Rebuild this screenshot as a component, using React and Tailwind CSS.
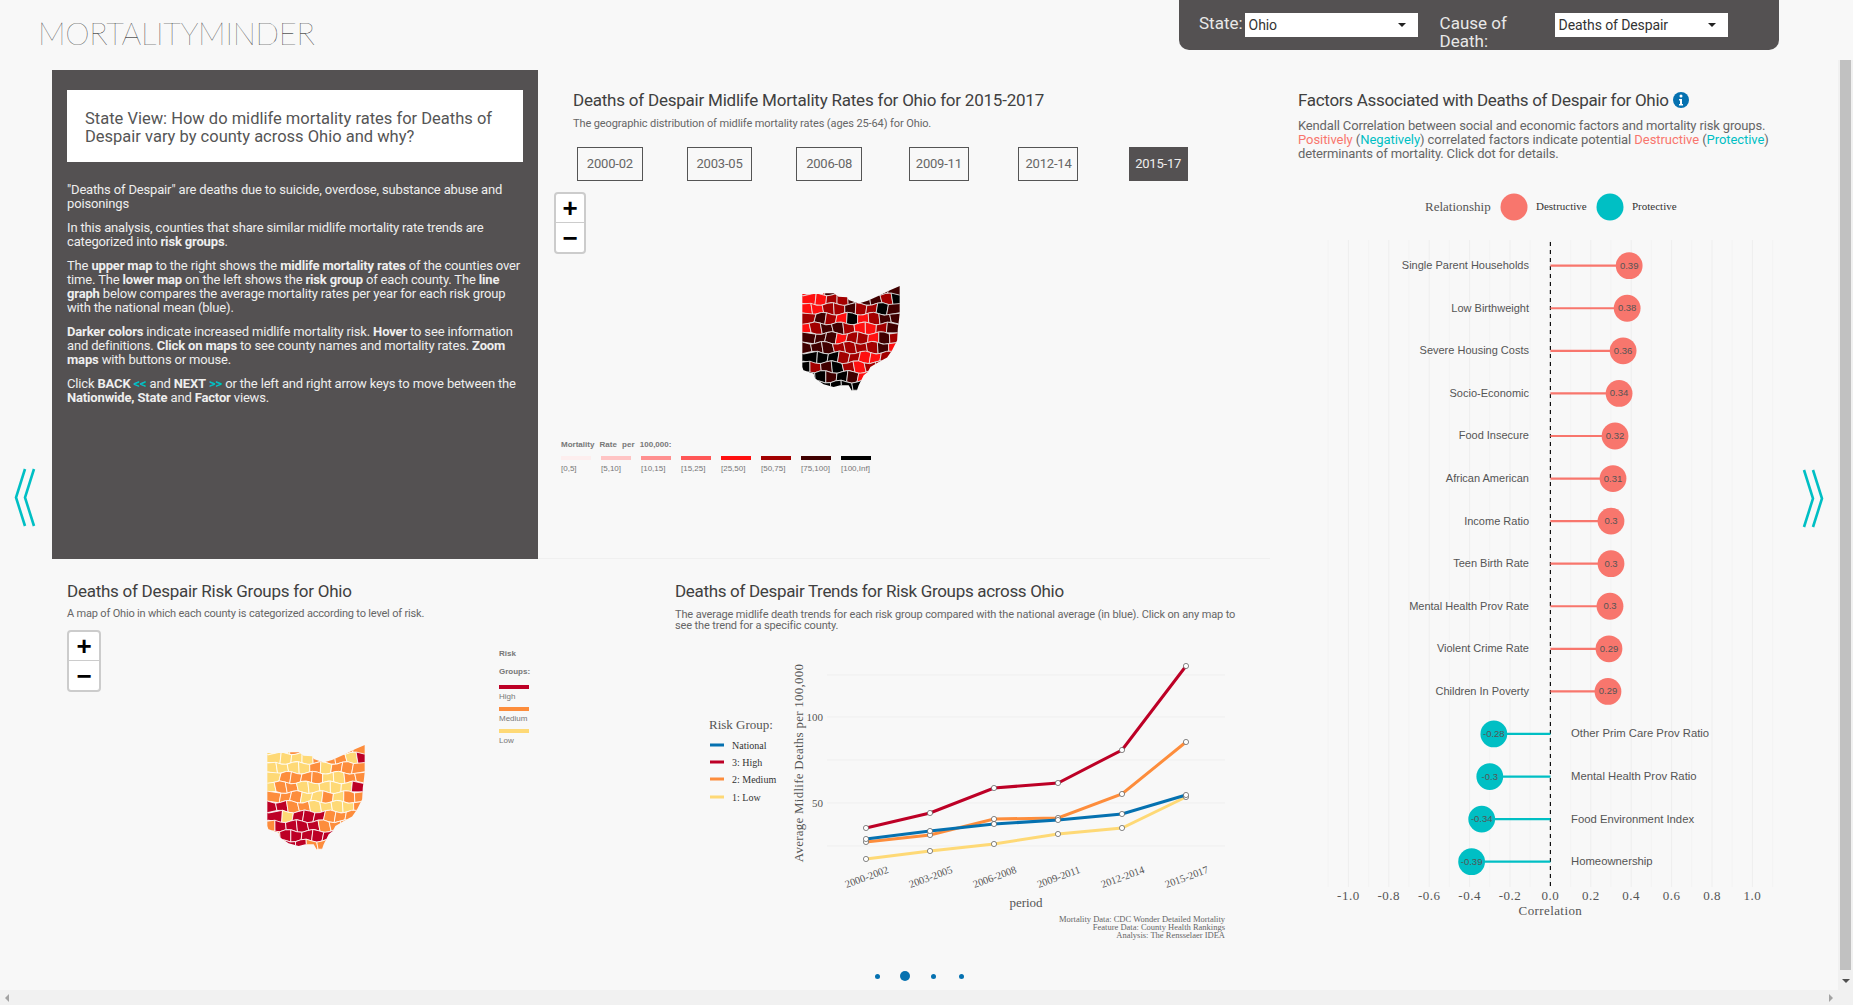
import React from 'react';

const OUTLINE = '66,72 128,72 130,70 160,70 175,80 200,82 205,90 235,100 262,92 300,75 330,60 358,48 358,130 352,175 350,210 335,240 320,262 295,275 270,290 262,305 250,315 235,345 228,365 215,362 205,345 180,345 160,350 130,342 105,325 100,310 70,300 66,290';

const RATE_COLORS = { R: '#ff1010', D: '#a30000', M: '#400000', K: '#000000' };
const RISK_COLORS = { H: '#bd0026', O: '#fd8d3c', L: '#fed976' };

const RATE_GRID = [
  'RRMDMMMMM',
  'RRDDMMMDK',
  'RRDDMDDKM',
  'DMDRKRDMM',
  'RDMMDRRDM',
  'MMMRDDRMD',
  'MMMDDDDMR',
  'KKKDDRRDR',
  'KDMKDRDDD',
  'KKMKMRKKK',
  'KKKKKKKKK',
];

const RISK_GRID = [
  'LLOLOOOOO',
  'LLLLOOOLH',
  'LLLLOLOOO',
  'LOOOOLLOO',
  'LOOLLLLLH',
  'OOOLLOLOO',
  'HHOOLLLLO',
  'HLHHHOOOO',
  'OHHHHOOOO',
  'OHHHHHOOO',
  'OOHHOOOOO',
];

const ROW_SHIFT = [0, 0.3, -0.15, 0.2, -0.25, 0.15, -0.1, 0.3, -0.2, 0.1, -0.3];

// horizontal county edge of row j, a gentle wave so the rows do not read as a table
function edgeY(j, x) {
  return 44 + j * 29 + 4.5 * Math.sin(x * 0.085 + j * 2.1);
}

// vertical county edge between cells of row j
function edgeX(i, j, lower) {
  if (i === 0) return 30;
  if (i === 9) return 400;
  const base = 66 + (i + ROW_SHIFT[j]) * 32.4;
  return base + Math.sin(i * 12.9 + j * 78.2 + (lower ? 1.7 : 0)) * 4;
}

function cellPoints(i, j) {
  const xt0 = edgeX(i, j, false);
  const xt1 = edgeX(i + 1, j, false);
  const xb0 = edgeX(i, j, true);
  const xb1 = edgeX(i + 1, j, true);
  const xtm = (xt0 + xt1) / 2;
  const xbm = (xb0 + xb1) / 2;
  const pts = [
    [xt0, edgeY(j, xt0)],
    [xtm, edgeY(j, xtm)],
    [xt1, edgeY(j, xt1)],
    [xb1, edgeY(j + 1, xb1)],
    [xbm, edgeY(j + 1, xbm)],
    [xb0, edgeY(j + 1, xb0)],
  ];
  return pts.map(p => p.join(',')).join(' ');
}

function OhioMap({ id, grid, colors, stroke }) {
  return (
    <svg width="98" height="106" viewBox="66 48 292 317">
      <defs>
        <clipPath id={id}>
          <polygon points={OUTLINE} />
        </clipPath>
      </defs>
      <g clipPath={`url(#${id})`}>
        {grid.map((row, j) =>
          row.split('').map((c, i) => (
            <polygon key={`${i}-${j}`} points={cellPoints(i, j)} fill={colors[c]} stroke={stroke} strokeWidth="2.4" />
          ))
        )}
      </g>
    </svg>
  );
}

function ZoomControl({ width }) {
  return (
    <div className={`${width} absolute left-0 top-0 rounded-[4px] border-2 border-[#ccc] bg-white font-['Liberation_Sans',sans-serif] text-[26px] font-bold leading-none text-black`}>
      <div className="flex h-[29px] items-center justify-center border-b border-[#ccc]">+</div>
      <div className="flex h-[29px] items-center justify-center">−</div>
    </div>
  );
}

const LEGEND_ITEMS = [
  ['#fdeeee', '[0,5]'],
  ['#ffc4c4', '[5,10]'],
  ['#ff8f8f', '[10,15]'],
  ['#ff5757', '[15,25]'],
  ['#ff1010', '[25,50]'],
  ['#a30000', '[50,75]'],
  ['#400000', '[75,100]'],
  ['#000000', '[100,Inf]'],
];

const YEARS = [
  ['2000-02', 'w-[66px]'],
  ['2003-05', 'w-[65px]'],
  ['2006-08', 'w-[66px]'],
  ['2009-11', 'w-[60px]'],
  ['2012-14', 'w-[60px]'],
  ['2015-17', 'w-[59px]'],
];

function RateMapPane() {
  return (
    <div className="flex-1 border-b border-[#f0f0f0] pl-[35px] pt-[20px]">
      <h2 className="h-[20px] text-[17px] font-normal leading-[20px] tracking-[-0.22px] text-[#404040]">
        Deaths of Despair Midlife Mortality Rates for Ohio for 2015-2017
      </h2>
      <p className="mt-[7px] h-[14px] text-[11px] leading-[14px] tracking-[-0.1px] text-[#666]">
        The geographic distribution of midlife mortality rates (ages 25-64) for Ohio.
      </p>
      <div className="-ml-[18px] mt-[16px] grid w-[658px] grid-cols-6 justify-items-center">
        {YEARS.map(([y, width], i) => (
          <div
            key={y}
            className={`${width} flex h-[34px] items-center justify-center whitespace-nowrap border text-[13px] tracking-[-0.2px] ${i === 5 ? 'border-[#545152] bg-[#545152] text-[#eee]' : 'border-[#555] text-[#666]'}`}
          >
            {y}
          </div>
        ))}
      </div>
      <div className="relative -ml-[19px] mt-[11px] flex h-[294px] w-[594px] items-center justify-center">
        <ZoomControl width="w-[32px]" />
        <OhioMap id="rate-map" grid={RATE_GRID} colors={RATE_COLORS} stroke="#e8e8e8" />
        <div className="absolute left-[7px] top-[247px] font-['Liberation_Sans',sans-serif] text-[8px] text-[#777]">
          <div className="h-[13px] font-bold leading-[12px] [word-spacing:3px]">Mortality Rate per 100,000:</div>
          <div className="mt-[4px] flex gap-[10px]">
            {LEGEND_ITEMS.map(([color, label]) => (
              <div key={label} className="w-[30px]">
                <div className="h-[4px]" style={{ backgroundColor: color }} />
                <div className="mt-[3px] h-[12px] leading-[12px]">{label}</div>
              </div>
            ))}
          </div>
        </div>
      </div>
    </div>
  );
}

function RiskMapPane() {
  return (
    <div className="w-[608px] pl-[15px] pt-[22px]">
      <h2 className="h-[20px] text-[17px] font-normal leading-[20px] tracking-[-0.26px] text-[#404040]">
        Deaths of Despair Risk Groups for Ohio
      </h2>
      <p className="mt-[6px] h-[14px] text-[11px] leading-[14px] tracking-[-0.18px] text-[#666]">
        A map of Ohio in which each county is categorized according to level of risk.
      </p>
      <div className="relative mt-[9px] flex h-[336px] w-[498px] items-center justify-center">
        <ZoomControl width="w-[34px]" />
        <OhioMap id="risk-map" grid={RISK_GRID} colors={RISK_COLORS} stroke="#ffffff" />
        <div className="absolute left-[432px] top-[18px] w-[30px] font-['Liberation_Sans',sans-serif] text-[8px] text-[#777]">
          <div className="h-[12px] font-bold leading-[12px]">Risk</div>
          <div className="mt-[6px] h-[12px] font-bold leading-[12px]">Groups:</div>
          <div className="mt-[7px] flex flex-col gap-[4px]">
            {[['#bd0026', 'High'], ['#fd8d3c', 'Medium'], ['#fed976', 'Low']].map(([color, label]) => (
              <div key={label}>
                <div className="h-[4px]" style={{ backgroundColor: color }} />
                <div className="mt-[2px] h-[12px] leading-[12px]">{label}</div>
              </div>
            ))}
          </div>
        </div>
      </div>
    </div>
  );
}

const PERIODS = ['2000-2002', '2003-2005', '2006-2008', '2009-2011', '2012-2014', '2015-2017'];
const XS = [866, 930, 994, 1058, 1122, 1186];
const SERIES = [
  { name: 'Low', color: '#fed976', ys: [858, 850, 843, 833, 827, 796] },
  { name: 'Medium', color: '#fd8d3c', ys: [841, 834, 818, 817, 793, 741] },
  { name: 'National', color: '#0571b0', ys: [838, 830, 823, 819, 813, 794] },
  { name: 'High', color: '#bd0026', ys: [827, 812, 787, 782, 749, 665] },
];
const TREND_LEGEND = [
  ['#0571b0', 'National', 744],
  ['#bd0026', '3: High', 761],
  ['#fd8d3c', '2: Medium', 778],
  ['#fed976', '1: Low', 796],
];

function TrendChart() {
  return (
    <svg width="560" height="310" viewBox="680 640 560 310" className="ml-[5px] mt-[10px] block font-['Liberation_Serif',serif]">
      {[674, 716, 759, 802, 845].map(y => (
        <line key={y} x1="827" x2="1225" y1={y} y2={y} stroke="#efefef" strokeWidth="1" />
      ))}
      <text x="823" y="720" textAnchor="end" className="fill-[#555] text-[11px]">100</text>
      <text x="823" y="806" textAnchor="end" className="fill-[#555] text-[11px]">50</text>
      <text transform="translate(803 762) rotate(-90)" textAnchor="middle" className="fill-[#555] text-[13px] tracking-[0.25px]">
        Average Midlife Deaths per 100,000
      </text>
      {SERIES.map(s => (
        <polyline
          key={s.name}
          points={s.ys.map((y, i) => `${XS[i]},${y}`).join(' ')}
          fill="none"
          stroke={s.color}
          strokeWidth="3"
        />
      ))}
      {SERIES.map(s =>
        s.ys.map((y, i) => (
          <circle key={`${s.name}-${i}`} cx={XS[i]} cy={y} r="2.6" fill="#fff" stroke="#555" strokeWidth="0.7" />
        ))
      )}
      {PERIODS.map((p, i) => (
        <text key={p} transform={`translate(${XS[i] + 1} 877) rotate(-20)`} textAnchor="middle" dominantBaseline="middle" className="fill-[#555] text-[10.5px]">
          {p}
        </text>
      ))}
      <text x="1026" y="906" textAnchor="middle" className="fill-[#555] text-[13px]">period</text>
      <text x="709" y="728" className="fill-[#555] text-[13px]">Risk Group:</text>
      {TREND_LEGEND.map(([color, label, y]) => (
        <g key={label}>
          <line x1="710" x2="724" y1={y} y2={y} stroke={color} strokeWidth="3" />
          <text x="732" y={y + 3.5} className="fill-[#333] text-[10px]">{label}</text>
        </g>
      ))}
      <g textAnchor="end" className="fill-[#666] text-[8.5px]">
        <text x="1225" y="921">Mortality Data: CDC Wonder Detailed Mortality</text>
        <text x="1225" y="929">Feature Data: County Health Rankings</text>
        <text x="1225" y="937">Analysis: The Rensselaer IDEA</text>
      </g>
    </svg>
  );
}

function TrendPane() {
  return (
    <div className="flex-1 pl-[15px] pt-[22px]">
      <h2 className="h-[20px] text-[17px] font-normal leading-[20px] tracking-[-0.32px] text-[#404040]">
        Deaths of Despair Trends for Risk Groups across Ohio
      </h2>
      <p className="mt-[8px] text-[11px] leading-[11px] tracking-[-0.13px] text-[#666]">
        The average midlife death trends for each risk group compared with the national average (in blue). Click on any map to
        <br />
        see the trend for a specific county.
      </p>
      <TrendChart />
    </div>
  );
}

const FACTORS = [
  ['Single Parent Households', 0.39, 0.39],
  ['Low Birthweight', 0.38, 0.38],
  ['Severe Housing Costs', 0.36, 0.36],
  ['Socio-Economic', 0.34, 0.34],
  ['Food Insecure', 0.32, 0.32],
  ['African American', 0.31, 0.31],
  ['Income Ratio', 0.3, 0.3],
  ['Teen Birth Rate', 0.3, 0.3],
  ['Mental Health Prov Rate', 0.295, 0.3],
  ['Violent Crime Rate', 0.29, 0.29],
  ['Children In Poverty', 0.285, 0.29],
  ['Other Prim Care Prov Ratio', -0.28, -0.28],
  ['Mental Health Prov Ratio', -0.3, -0.3],
  ['Food Environment Index', -0.34, -0.34],
  ['Homeownership', -0.39, -0.39],
];
const TICKS = [-1, -0.8, -0.6, -0.4, -0.2, 0, 0.2, 0.4, 0.6, 0.8, 1];
const MINOR = [-1.1, -0.9, -0.7, -0.5, -0.3, -0.1, 0.1, 0.3, 0.5, 0.7, 0.9, 1.1];
const ZERO = 1550.4;
const UNIT = 202;

function LollipopChart() {
  return (
    <svg width="500" height="760" viewBox="1290 170 500 760" className="-ml-[8px] mt-[9px]">
      <g className="font-['Liberation_Serif',serif]">
        <text x="1425" y="211" className="fill-[#555] text-[13px]">Relationship</text>
        <ellipse cx="1514" cy="207" rx="13.5" ry="13.5" fill="#f8766d" />
        <text x="1536" y="210" className="fill-[#333] text-[11px]">Destructive</text>
        <ellipse cx="1610" cy="207" rx="13.5" ry="13.5" fill="#00bfc4" />
        <text x="1632" y="210" className="fill-[#333] text-[11px]">Protective</text>
      </g>
      {MINOR.map(t => (
        <line key={t} x1={ZERO + t * UNIT} x2={ZERO + t * UNIT} y1="240" y2="887" stroke="#f3f3f3" strokeWidth="1" />
      ))}
      {TICKS.map(t => (
        <line key={t} x1={ZERO + t * UNIT} x2={ZERO + t * UNIT} y1="240" y2="887" stroke="#eeeeee" strokeWidth="1" />
      ))}
      <line x1={ZERO} x2={ZERO} y1="242" y2="887" stroke="#111" strokeWidth="1.2" strokeDasharray="4 4" />
      {FACTORS.map(([name, pos, value], i) => {
        const y = 265.7 + i * 42.57;
        const cx = ZERO + pos * UNIT;
        const color = value > 0 ? '#f8766d' : '#00bfc4';
        return (
          <g key={name} className="font-['Liberation_Sans',sans-serif]">
            <line x1={ZERO} x2={cx} y1={y} y2={y} stroke={color} strokeWidth="2.2" />
            <circle cx={cx} cy={y} r="13.4" fill={color} />
            <text x={cx} y={y + 3} textAnchor="middle" className="fill-[#555] text-[9.5px]">{value}</text>
            <text
              x={value > 0 ? 1529 : 1571}
              y={y + 3.5}
              textAnchor={value > 0 ? 'end' : 'start'}
              className={value > 0 ? 'fill-[#555] text-[11px]' : 'fill-[#555] text-[11.3px]'}
            >
              {name}
            </text>
          </g>
        );
      })}
      <g className="font-['Liberation_Serif',serif]">
        {TICKS.map(t => (
          <text key={t} x={ZERO + t * UNIT} y="900" textAnchor="middle" className="fill-[#555] text-[13px] tracking-[0.5px]">
            {t.toFixed(1)}
          </text>
        ))}
        <text x={ZERO} y="915" textAnchor="middle" className="fill-[#555] text-[13px] tracking-[0.4px]">Correlation</text>
      </g>
    </svg>
  );
}

function FactorPane() {
  return (
    <div className="w-[520px] pl-[28px] pt-[20px]">
      <h2 className="flex h-[20px] items-center gap-[4px] text-[17px] font-normal leading-[20px] tracking-[-0.3px] text-[#404040]">
        Factors Associated with Deaths of Despair for Ohio
        <svg width="16" height="16" viewBox="0 0 16 16">
          <circle cx="8" cy="8" r="8" fill="#0571b0" />
          <circle cx="8" cy="4" r="1.5" fill="#fff" />
          <path d="M6 7h3v5h1v1.4H6V12h1V8.4H6z" fill="#fff" />
        </svg>
      </h2>
      <p className="mt-[9px] whitespace-nowrap text-[13px] leading-[14px] tracking-[-0.15px] text-[#666]">
        Kendall Correlation between social and economic factors and mortality risk groups.
        <br />
        <span className="tracking-[-0.06px]">
          <span className="text-[#f8766d]">Positively</span> (<span className="text-[#00bfc4]">Negatively</span>) correlated factors indicate potential{' '}
          <span className="text-[#f8766d]">Destructive</span> (<span className="text-[#00bfc4]">Protective</span>)
        </span>
        <br />
        determinants of mortality. Click dot for details.
      </p>
      <LollipopChart />
    </div>
  );
}

function IntroPanel() {
  return (
    <div className="h-[489px] w-[486px] bg-[#545152] px-[15px] pt-[20px]">
      <div className="flex h-[72px] items-center bg-white pl-[18px] pt-[4px] text-[16.5px] leading-[18.5px] text-[#555]">
        <div>
          State View: How do midlife mortality rates for Deaths of
          <br />
          Despair vary by county across Ohio and why?
        </div>
      </div>
      <div className="mt-[21px] space-y-[10px] whitespace-nowrap text-[13px] leading-[14px] tracking-[-0.16px] text-[#eee]">
        <p>
          "Deaths of Despair" are deaths due to suicide, overdose, substance abuse and
          <br />
          poisonings
        </p>
        <p>
          In this analysis, counties that share similar midlife mortality rate trends are
          <br />
          categorized into <b>risk groups</b>.
        </p>
        <p>
          The <b>upper map</b> to the right shows the <b>midlife mortality rates</b> of the counties over
          <br />
          time. The <b>lower map</b> on the left shows the <b>risk group</b> of each county. The <b>line</b>
          <br />
          <b>graph</b> below compares the average mortality rates per year for each risk group
          <br />
          with the national mean (blue).
        </p>
        <p>
          <b>Darker colors</b> indicate increased midlife mortality risk. <b>Hover</b> to see information
          <br />
          and definitions. <b>Click on maps</b> to see county names and mortality rates. <b>Zoom</b>
          <br />
          <b>maps</b> with buttons or mouse.
        </p>
        <p>
          Click <b>BACK</b> <b className="text-[#00bfc4]">{'<<'}</b> and <b>NEXT</b> <b className="text-[#00bfc4]">{'>>'}</b> or the left and right arrow keys to move between the
          <br />
          <b>Nationwide, State</b> and <b>Factor</b> views.
        </p>
      </div>
    </div>
  );
}

function Chevrons({ flip }) {
  return (
    <svg width="24" height="60" viewBox="0 0 24 60" className={flip ? 'rotate-180' : ''}>
      <path d="M11 1 L2 29.5 L11 58" fill="none" stroke="#00bfc4" strokeWidth="2.6" />
      <path d="M20 1 L11 29.5 L20 58" fill="none" stroke="#00bfc4" strokeWidth="2.6" />
    </svg>
  );
}

function Dropdown({ value, className }) {
  return (
    <div className={`${className} flex h-[24px] w-[173px] items-center justify-between bg-white pl-[4px] pr-[12px] text-[14px] tracking-[-0.1px] text-[#333]`}>
      {value}
      <span className="h-0 w-0 border-x-[4px] border-t-[4px] border-x-transparent border-t-[#222]" />
    </div>
  );
}

function Header() {
  return (
    <header className="flex h-[70px] shrink-0 items-start">
      <div className="ml-[38px] mt-[18px] font-['Lato',sans-serif] text-[31px] font-thin leading-[31px] tracking-[-0.3px] text-black">
        MORTALITYMINDER
      </div>
      <div className="ml-auto mr-[59px] flex h-[50px] w-[600px] overflow-hidden rounded-b-[10px] bg-[#545152] pl-[20px] text-[17px] leading-[18px] text-[#e8e8e8]">
        <span className="mt-[14px]">State:</span>
        <Dropdown value="Ohio" className="ml-[2px] mt-[13px]" />
        <span className="ml-[22px] mt-[14px] w-[115px]">Cause of Death:</span>
        <Dropdown value="Deaths of Despair" className="mt-[13px]" />
      </div>
    </header>
  );
}

const DOTS = ['h-[5px] w-[5px]', 'h-[10px] w-[10px]', 'h-[5px] w-[5px]', 'h-[5px] w-[5px]'];

export default function App() {
  return (
    <div className="flex h-screen w-full flex-col overflow-hidden bg-[#f8f8f8] font-['Roboto',sans-serif]">
      <div className="flex min-h-0 flex-1">
        <div className="w-[1838px]">
          <Header />
          <main className="flex h-[897px]">
            <div className="w-[52px] pl-[14px] pt-[398px]">
              <Chevrons />
            </div>
            <div className="w-[1218px]">
              <div className="flex h-[489px]">
                <IntroPanel />
                <RateMapPane />
              </div>
              <div className="flex h-[408px]">
                <RiskMapPane />
                <TrendPane />
              </div>
            </div>
            <FactorPane />
            <div className="pl-[10px] pt-[398px]">
              <Chevrons flip />
            </div>
          </main>
          <div className="flex h-[18px] items-center justify-center">
            {DOTS.map((size, i) => (
              <div key={i} className="flex w-[28px] justify-center">
                <span className={`${size} rounded-full bg-[#0571b0]`} />
              </div>
            ))}
          </div>
        </div>
        <div className="flex w-[15px] flex-col pt-[60px]">
          <div className="flex flex-1 flex-col items-center bg-[#f1f1f1]">
            <div className="h-[910px] w-[11px] bg-[#c1c1c1]" />
            <span className="mt-[9px] h-0 w-0 border-x-[4px] border-t-[4px] border-x-transparent border-t-[#505050]" />
          </div>
        </div>
      </div>
      <div className="flex h-[15px] shrink-0 items-center justify-between bg-[#f1f1f1] px-[5px]">
        <span className="h-0 w-0 border-y-[4px] border-r-[4px] border-y-transparent border-r-[#a3a3a3]" />
        <span className="mr-[15px] h-0 w-0 border-y-[4px] border-l-[4px] border-y-transparent border-l-[#a3a3a3]" />
      </div>
    </div>
  );
}
